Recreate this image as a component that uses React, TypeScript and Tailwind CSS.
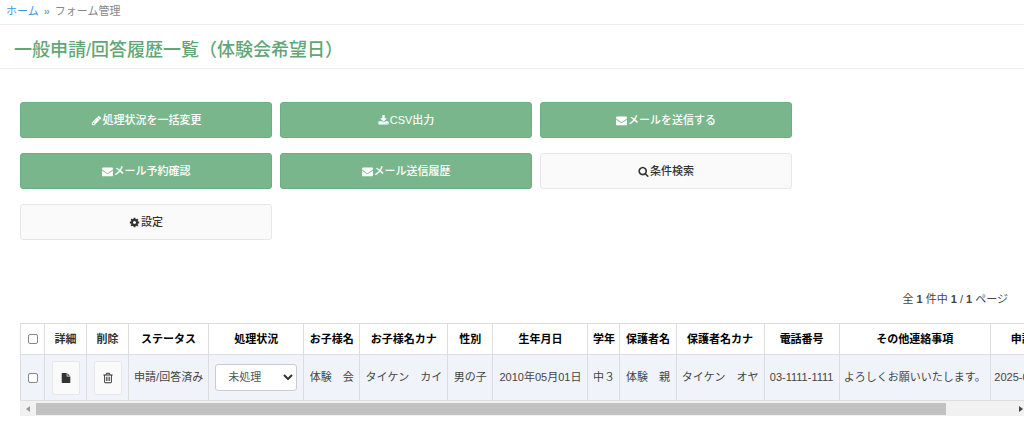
import { clsx } from "clsx";
import type { ReactNode } from "react";

const icons = {
  pencil:
    "M491 1536l91-91-235-235-91 91v107h128v128h107zm523-928q0-22-22-22-10 0-17 7l-542 542q-7 7-7 17 0 22 22 22 10 0 17-7l542-542q7-7 7-17zm-54-192l416 416-832 832h-416v-416zm683 96q0 53-37 90l-166 166-416-416 166-165q36-38 90-38 53 0 91 38l235 234q37 39 37 91z",
  download:
    "M1344 1344q0-26-19-45t-45-19-45 19-19 45 19 45 45 19 45-19 19-45zm256 0q0-26-19-45t-45-19-45 19-19 45 19 45 45 19 45-19 19-45zm128-224v320q0 40-28 68t-68 28h-1472q-40 0-68-28t-28-68v-320q0-40 28-68t68-28h465l135 136q58 56 136 56t136-56l136-136h464q40 0 68 28t28 68zm-325-569q17 41-14 70l-448 448q-18 19-45 19t-45-19l-448-448q-31-29-14-70 17-39 59-39h256v-448q0-26 19-45t45-19h256q26 0 45 19t19 45v448h256q42 0 59 39z",
  envelope:
    "M1792 710v794q0 66-47 113t-113 47h-1472q-66 0-113-47t-47-113v-794q44 49 101 87 362 246 497 345 57 42 92.5 65.5t94.5 48 110 24.5h2q51 0 110-24.5t94.5-48 92.5-65.5q170-123 498-345 57-39 100-87zm0-294q0 79-49 151t-122 123q-376 261-468 325-10 7-42.5 31t-54 38.5-52 32.5-57.5 27-50 9h-2q-23 0-50-9t-57.5-27-52-32.5-54-38.5-42.5-31q-91-64-262-182.5t-205-142.5q-62-42-117-115.5t-55-136.5q0-78 41.5-130t118.5-52h1472q65 0 112.5 47t47.5 113z",
  search:
    "M1216 832q0-185-131.5-316.5t-316.5-131.5-316.5 131.5-131.5 316.5 131.5 316.5 316.5 131.5 316.5-131.5 131.5-316.5zm512 832q0 52-38 90t-90 38q-54 0-90-38l-343-342q-179 124-399 124-143 0-273.5-55.5t-225-150-150-225-55.5-273.5 55.5-273.5 150-225 225-150 273.5-55.5 273.5 55.5 225 150 150 225 55.5 273.5q0 220-124 399l343 343q37 37 37 90z",
  cog: "M1152 896q0-106-75-181t-181-75-181 75-75 181 75 181 181 75 181-75 75-181zm512-109v222q0 12-8 23t-20 13l-185 28q-19 54-39 91 35 50 107 138 10 12 10 25t-9 23q-27 37-99 108t-94 71q-12 0-26-9l-138-108q-44 23-91 38-16 136-29 186-7 28-36 28h-222q-14 0-24.5-8.5t-11.5-21.5l-28-184q-49-16-90-37l-141 107q-10 9-25 9-14 0-25-11-126-114-165-168-7-10-7-23 0-12 8-23 15-21 51-66.5t54-70.5q-27-50-41-99l-183-27q-13-2-21-12.5t-8-23.5v-222q0-12 8-23t19-13l186-28q14-46 39-92-40-57-107-138-10-12-10-24 0-10 9-23 26-36 98.5-107.5t94.5-71.5q13 0 26 10l138 107q44-23 91-38 16-136 29-186 7-28 36-28h222q14 0 24.5 8.5t11.5 21.5l28 184q49 16 90 37l142-107q9-9 24-9 13 0 25 10 129 119 165 170 7 8 7 22 0 12-8 23-15 21-51 66.5t-54 70.5q26 50 41 98l183 28q13 2 21 12.5t8 23.5z",
  file: "M1152 512v-472q22 14 36 28l408 408q14 14 28 36h-472zm-128 32q0 40 28 68t68 28h544v1056q0 40-28 68t-68 28h-1344q-40 0-68-28t-28-68v-1600q0-40 28-68t68-28h800v544z",
  trash:
    "M704 736v576q0 14-9 23t-23 9h-64q-14 0-23-9t-9-23v-576q0-14 9-23t23-9h64q14 0 23 9t9 23zm256 0v576q0 14-9 23t-23 9h-64q-14 0-23-9t-9-23v-576q0-14 9-23t23-9h64q14 0 23 9t9 23zm256 0v576q0 14-9 23t-23 9h-64q-14 0-23-9t-9-23v-576q0-14 9-23t23-9h64q14 0 23 9t9 23zm128 724v-948h-896v948q0 22 7 40.5t14.5 27 10.5 8.5h832q3 0 10.5-8.5t14.5-27 7-40.5zm-672-1076h448l-48-117q-7-9-17-11h-317q-10 2-17 11zm928 32v64q0 14-9 23t-23 9h-96v948q0 83-47 143.5t-113 60.5h-832q-66 0-113-58.5t-47-141.5v-952h-96q-14 0-23-9t-9-23v-64q0-14 9-23t23-9h309l70-167q15-37 54-63t79-26h320q40 0 79 26t54 63l70 167h309q14 0 23 9t9 23z",
};

type IconName = keyof typeof icons;

const Icon = ({ name, className }: { name: IconName; className?: string }) => (
  <svg
    viewBox="0 0 1792 1792"
    fill="currentColor"
    aria-hidden="true"
    className={clsx("shrink-0", className)}
  >
    <path d={icons[name]} />
  </svg>
);

interface Action {
  label: string;
  icon: IconName;
  primary: boolean;
}

const actions: Action[] = [
  { label: "処理状況を一括変更", icon: "pencil", primary: true },
  { label: "CSV出力", icon: "download", primary: true },
  { label: "メールを送信する", icon: "envelope", primary: true },
  { label: "メール予約確認", icon: "envelope", primary: true },
  { label: "メール送信履歴", icon: "envelope", primary: true },
  { label: "条件検索", icon: "search", primary: false },
  { label: "設定", icon: "cog", primary: false },
];

const ActionButton = ({ label, icon, primary }: Action) => (
  <button
    type="button"
    className={clsx(
      "flex h-9 items-center justify-center gap-px rounded-[3px] border pt-px text-[11px] font-medium",
      primary
        ? "border-[#6bae7f] bg-[#7ab68c] text-white"
        : "border-[#e7e7e7] bg-[#fafafa] text-[#333]",
    )}
  >
    <Icon name={icon} className="size-[11px]" />
    {label}
  </button>
);

const columns = [
  { label: "ステータス", width: "w-20", value: "申請/回答済み" },
  { label: "処理状況", width: "w-[95px]", value: "" },
  { label: "お子様名", width: "w-14", value: "体験　会" },
  { label: "お子様名カナ", width: "w-[88px]", value: "タイケン　カイ" },
  { label: "性別", width: "w-[45px]", value: "男の子" },
  { label: "生年月日", width: "w-[95px]", value: "2010年05月01日" },
  { label: "学年", width: "w-8", value: "中３" },
  { label: "保護者名", width: "w-14", value: "体験　親" },
  { label: "保護者名カナ", width: "w-[88px]", value: "タイケン　オヤ" },
  { label: "電話番号", width: "w-[75px]", value: "03-1111-1111" },
  { label: "その他連絡事項", width: "w-[151px]", value: "よろしくお願いいたします。" },
  { label: "申請/回答日時", width: "w-[110px]", value: "2025-04-01 10:00:00" },
];

const Th = ({ children, className }: { children: ReactNode; className?: string }) => (
  <th className={clsx("border border-[#ddd] p-0 font-bold whitespace-nowrap", className)}>
    {children}
  </th>
);

const Td = ({ children }: { children: ReactNode }) => (
  <td className="border border-[#ddd] p-0 text-center whitespace-nowrap">{children}</td>
);

const Check = ({ label }: { label: string }) => (
  <input
    type="checkbox"
    aria-label={label}
    className="mx-auto block size-[10px] appearance-none rounded-[2px] border border-[#888] bg-white checked:bg-[#7ab68c]"
  />
);

const IconButton = ({ name, label }: { name: IconName; label: string }) => (
  <button
    type="button"
    aria-label={label}
    className="mx-auto flex h-[34px] w-7 items-center justify-center rounded-[2px] border border-[#e7e7e7] bg-[#fafafa] text-[#333]"
  >
    <Icon name={name} className={name === "file" ? "size-[10px]" : "size-3"} />
  </button>
);

const StatusSelect = () => (
  <div className="relative mx-auto w-[82px]">
    <select
      aria-label="処理状況"
      className="block h-[27px] w-full appearance-none rounded-[3px] border border-[#ccc] bg-white pl-3 text-[11px] text-[#555]"
    >
      <option>未処理</option>
      <option>処理済み</option>
    </select>
    <svg
      viewBox="0 0 10 6"
      fill="none"
      stroke="#333"
      strokeWidth="2"
      className="pointer-events-none absolute top-[10px] right-1 h-[6px] w-[10px]"
    >
      <path d="M1 1l4 4 4-4" />
    </svg>
  </div>
);

const EntryTable = () => (
  <div className="overflow-x-auto [scrollbar-width:none]">
    <table className="w-[1081px] table-fixed border-collapse text-[11px]">
      <colgroup>
        <col className="w-6" />
        <col className="w-[42px]" />
        <col className="w-[42px]" />
        {columns.map((column) => (
          <col key={column.label} className={column.width} />
        ))}
      </colgroup>
      <thead>
        <tr className="h-[31px] text-black">
          <Th>
            <Check label="すべて選択" />
          </Th>
          <Th className="text-[#333]">詳細</Th>
          <Th className="text-[#333]">削除</Th>
          {columns.map((column) => (
            <Th key={column.label}>{column.label}</Th>
          ))}
        </tr>
      </thead>
      <tbody>
        <tr className="h-[46px] bg-[#f0f4fa] text-[#444]">
          <Td>
            <Check label="選択" />
          </Td>
          <Td>
            <IconButton name="file" label="詳細" />
          </Td>
          <Td>
            <IconButton name="trash" label="削除" />
          </Td>
          {columns.map((column) => (
            <Td key={column.label}>
              {column.label === "処理状況" ? <StatusSelect /> : column.value}
            </Td>
          ))}
        </tr>
      </tbody>
    </table>
  </div>
);

const ScrollBar = () => (
  <div className="flex h-[15px] items-center bg-[#f1f1f1]" aria-hidden="true">
    <svg viewBox="0 0 16 14" className="h-[14px] w-4 fill-[#999]">
      <path d="M10 4v6L6 7z" />
    </svg>
    <div className="flex h-3 flex-1">
      <div className="w-[93%] bg-[#c1c1c1]" />
    </div>
    <svg viewBox="0 0 10 14" className="h-[14px] w-[10px] fill-[#444]">
      <path d="M5 4v6l4-3z" />
    </svg>
  </div>
);

export default function App() {
  return (
    <div className="min-h-screen bg-white font-['Liberation_Sans','Noto_Sans_CJK_JP',sans-serif] text-[#444]">
      <nav className="flex h-[25px] items-center border-b border-[#eee] px-[6px] pb-[2px] text-[11px] text-[#888]">
        <a href="#" className="text-[#3b99e0]">
          ホーム
        </a>
        <span className="px-[5px] font-bold text-[#7ab68c]">»</span>
        <span>フォーム管理</span>
      </nav>

      <h1 className="flex h-11 items-center border-b border-[#eee] px-[14px] pt-[6px] text-lg font-medium text-[#5fa777]">
        一般申請/回答履歴一覧（体験会希望日）
      </h1>

      <main className="pt-[33px] pl-5">
        <div className="grid max-w-[772px] grid-cols-3 gap-x-2 gap-y-[15px]">
          {actions.map((action) => (
            <ActionButton key={action.label} {...action} />
          ))}
        </div>

        <p className="mt-[51px] mb-4 pr-4 text-right text-[11px] leading-4">
          全 <b>1</b> 件中 <b>1</b> / <b>1</b> ページ
        </p>

        <EntryTable />
        <ScrollBar />
      </main>
    </div>
  );
}
